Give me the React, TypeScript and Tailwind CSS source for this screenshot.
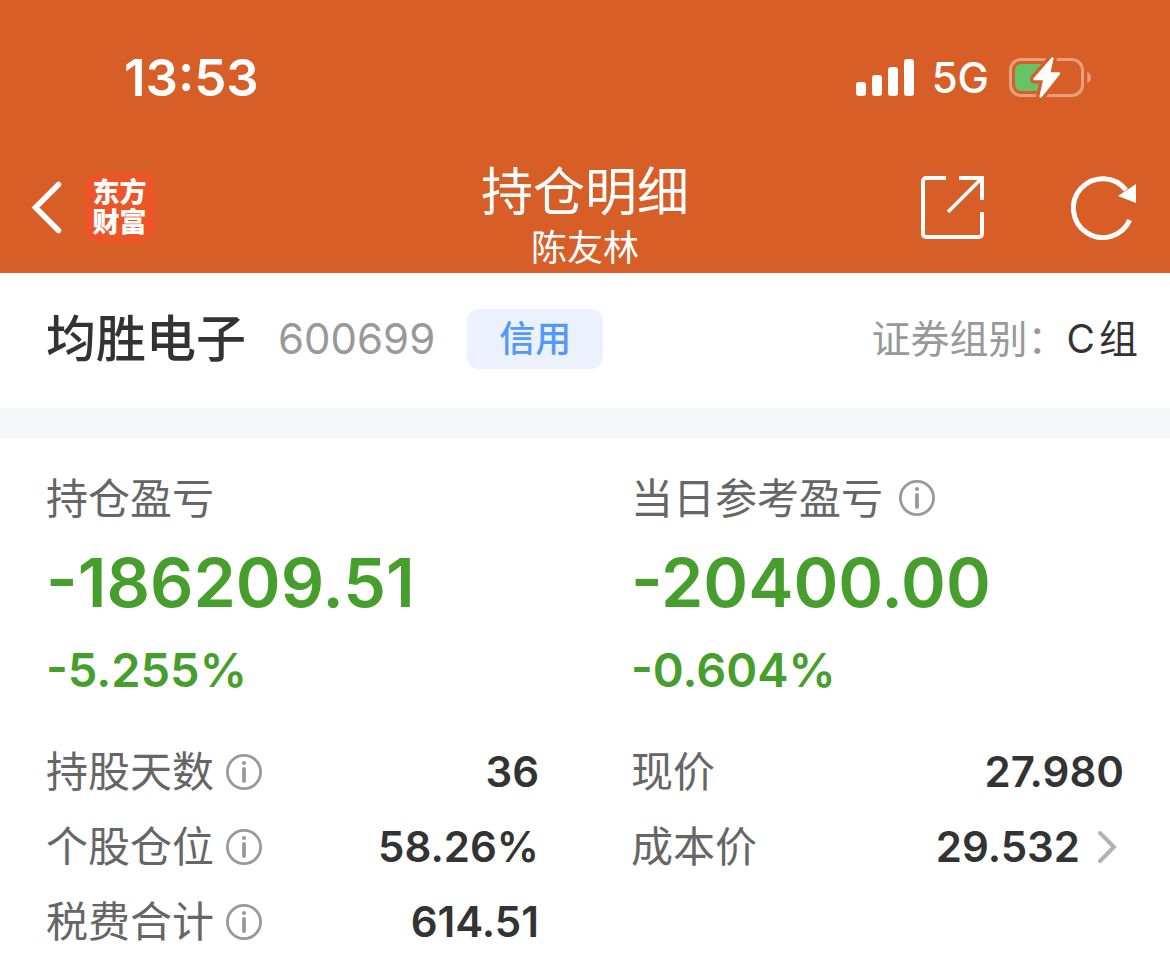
type Metric = {
  label: string;
  value: string;
  info?: boolean;
  link?: boolean;
};

const leftMetrics: Metric[] = [
  { label: '持股天数', value: '36', info: true },
  { label: '个股仓位', value: '58.26%', info: true },
  { label: '税费合计', value: '614.51', info: true },
];

const rightMetrics: Metric[] = [
  { label: '现价', value: '27.980' },
  { label: '成本价', value: '29.532', link: true },
];

function SignalIcon() {
  return (
    <svg width="58" height="38" viewBox="0 0 58 38" fill="#fff" aria-hidden="true">
      <rect x="0" y="23" width="10" height="14" rx="3" />
      <rect x="16" y="16" width="10" height="21" rx="3" />
      <rect x="32" y="8" width="10" height="29" rx="3" />
      <rect x="48" y="0" width="10" height="37" rx="3" />
    </svg>
  );
}

function BatteryIcon() {
  const bolt = 'M43.3 2.5 L25.5 23 L35.5 23 L31.7 40.5 L50 17.5 L40 17.5 Z';
  return (
    <svg width="83" height="44" viewBox="0 0 83 44" fill="none" aria-hidden="true">
      <rect x="1.5" y="3.5" width="72" height="36" rx="10.5" stroke="#E79F7D" strokeWidth="3" />
      <path d="M78.3 15.7 C83.2 17.5 83.2 25.5 78.3 27.3 Z" fill="#E79F7D" />
      <path d="M12 8 H38 V35 H12 A6 6 0 0 1 6 29 V14 A6 6 0 0 1 12 8 Z" fill="#67C466" />
      <path d="M34 21 L43 8 V36 H30 Z" fill="#D75F27" />
      <path d={bolt} fill="#D75F27" stroke="#D75F27" strokeWidth="9" strokeLinejoin="round" />
      <path d={bolt} fill="#fff" stroke="#fff" strokeWidth="2.5" strokeLinejoin="round" />
    </svg>
  );
}

function InfoIcon() {
  return (
    <svg width="36" height="36" viewBox="0 0 36 36" fill="none" aria-hidden="true">
      <circle cx="18" cy="18" r="16.6" stroke="#999" strokeWidth="2.8" />
      <circle cx="18" cy="9" r="2.1" fill="#999" />
      <path d="M18 15 V27" stroke="#999" strokeWidth="3.8" strokeLinecap="round" />
    </svg>
  );
}

function InfoButton({ label }: { label: string }) {
  return (
    <button type="button" aria-label={`${label}说明`} className="shrink-0">
      <InfoIcon />
    </button>
  );
}

function Summary({ label, amount, percent, info }: { label: string; amount: string; percent: string; info?: boolean }) {
  return (
    <div>
      <div className="flex h-[60px] items-center gap-4">
        <span className="text-[42px] text-[#666]">{label}</span>
        {info && <InfoButton label={label} />}
      </div>
      <p className="mt-2 text-[68px] leading-[92px] font-semibold">{amount}</p>
      <p className="mt-3 text-[47px] leading-[60px] font-semibold">{percent}</p>
    </div>
  );
}

function MetricList({ items }: { items: Metric[] }) {
  return (
    <dl>
      {items.map((item) => (
        <div key={item.label} className="flex h-[75px] items-center justify-between">
          <dt className="flex items-center gap-3 text-[42px] text-[#666]">
            {item.label}
            {item.info && <InfoButton label={item.label} />}
          </dt>
          <dd className="flex items-center text-[42px] font-semibold text-[#333]">
            {item.value}
            {item.link && (
              <button type="button" aria-label="成本价详情" className="pr-[6px] pl-4">
                <svg width="22" height="34" viewBox="0 0 22 34" fill="none" aria-hidden="true">
                  <path d="M4 3 L18 17 L4 31" stroke="#B2B2B2" strokeWidth="4" strokeLinecap="round" />
                </svg>
              </button>
            )}
          </dd>
        </div>
      ))}
    </dl>
  );
}

export default function App() {
  return (
    <div lang="zh-CN" className="min-h-screen bg-white font-['Inter','Noto_Sans_CJK_SC',sans-serif] text-[#333]">
      <header className="bg-[#D75F27] text-white">
        {/* Status bar */}
        <div className="flex items-center justify-between pt-12 pr-[78px] pb-[34px] pl-[124px]">
          <span className="text-[51px] leading-[60px] font-semibold">13:53</span>
          <div className="flex items-center">
            <SignalIcon />
            <span className="ml-[18px] text-[42px] leading-[60px] font-medium">5G</span>
            <span className="ml-5">
              <BatteryIcon />
            </span>
          </div>
        </div>

        {/* Navigation */}
        <div className="grid h-[131px] grid-cols-[1fr_auto_1fr] items-center">
          <div className="flex items-center gap-5 pl-[30px]">
            <button type="button" aria-label="返回">
              <svg width="34" height="56" viewBox="0 0 34 56" fill="none" aria-hidden="true">
                <path d="M28.5 4.5 L5.5 27.5 L28.5 50.5" stroke="#fff" strokeWidth="5.5" strokeLinecap="round" />
              </svg>
            </button>
            <div className="flex size-[71px] flex-col items-center justify-center rounded-2xl bg-[#EC5528] text-[27px] leading-[30px] font-black">
              <span>东方</span>
              <span>财富</span>
            </div>
          </div>

          <div className="pt-3 text-center">
            <h1 className="text-[52px] leading-[68px] font-normal">持仓明细</h1>
            <p className="text-[36px] leading-[42px]">陈友林</p>
          </div>

          <div className="flex items-center justify-end gap-[86px] pr-[34px]">
            <button type="button" aria-label="分享">
              <svg width="64" height="64" viewBox="0 0 64 64" fill="none" stroke="#fff" strokeWidth="4" aria-hidden="true">
                <path d="M25 2 H5 A3 3 0 0 0 2 5 V58 A3 3 0 0 0 5 61 H58 A3 3 0 0 0 61 58 V36" />
                <path d="M38 2 H61 V24" />
                <path d="M27 36 L60 3" strokeWidth="3.6" />
              </svg>
            </button>
            <button type="button" aria-label="刷新">
              <svg width="65" height="64" viewBox="0 0 65 64" fill="none" aria-hidden="true">
                <path d="M58.7 44 A29.4 29.4 0 1 1 55 14" stroke="#fff" strokeWidth="5" />
                <path d="M47 20 L65 8 V27 Z" fill="#fff" />
              </svg>
            </button>
          </div>
        </div>
      </header>

      <main>
        {/* Stock */}
        <section className="flex items-center justify-between border-b-[30px] border-[#F6F7F9] pt-9 pr-8 pb-[39px] pl-[46px]">
          <div className="flex items-center">
            <h2 className="text-[50px] leading-[60px] font-medium">均胜电子</h2>
            <span className="ml-8 text-[42px] leading-[60px] text-[#999]">600699</span>
            <span className="ml-8 rounded-xl bg-[#EBF2FD] px-8 text-[36px] leading-[60px] font-medium text-[#5598F7]">
              信用
            </span>
          </div>
          <p className="flex text-[39px] leading-[60px]">
            <span className="text-[#999]">证券组别：</span>
            <span>C</span>
            <span className="ml-1">组</span>
          </p>
        </section>

        {/* Profit and loss */}
        <section className="px-[46px] pt-[30px]">
          <div className="grid grid-cols-2 gap-x-[92px] text-[#469E2C]">
            <Summary label="持仓盈亏" amount="-186209.51" percent="-5.255%" />
            <Summary label="当日参考盈亏" amount="-20400.00" percent="-0.604%" info />
          </div>
          <div className="mt-[34px] grid grid-cols-2 gap-x-[92px]">
            <MetricList items={leftMetrics} />
            <MetricList items={rightMetrics} />
          </div>
        </section>
      </main>
    </div>
  );
}
